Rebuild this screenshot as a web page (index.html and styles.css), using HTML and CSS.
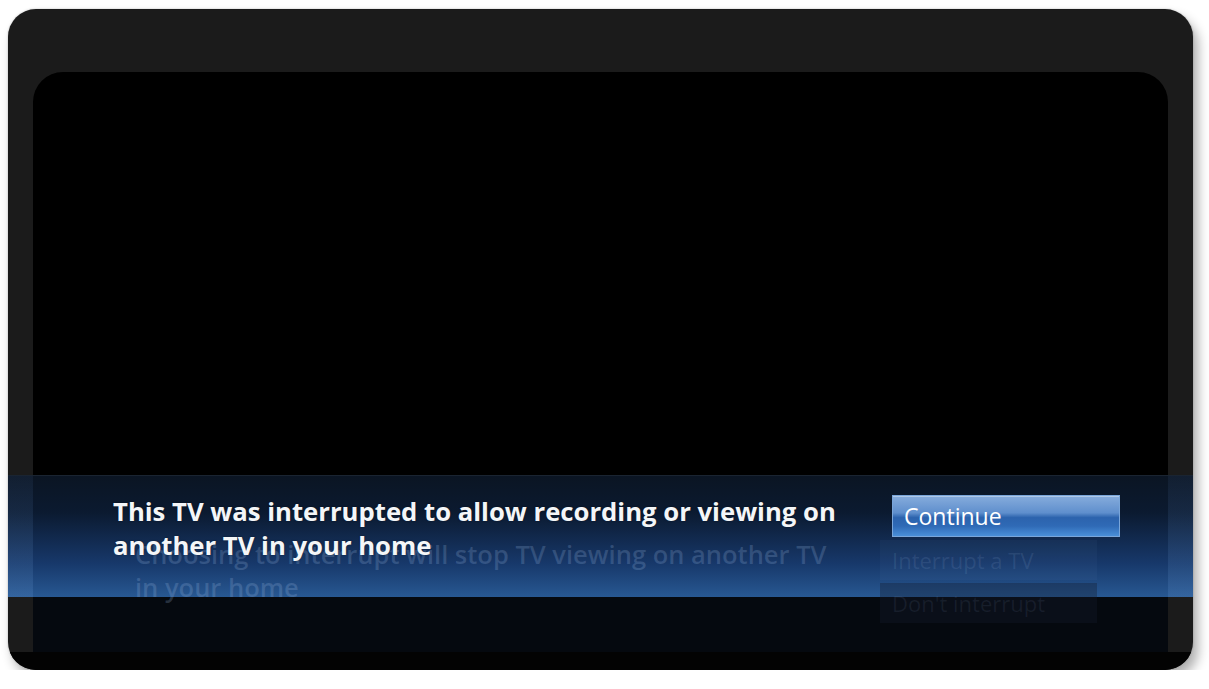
FILE: index.html
```html
<!DOCTYPE html>
<html lang="en">
<head>
<meta charset="utf-8">
<title>TV interrupted</title>
<link rel="stylesheet" href="styles.css">
</head>
<body>
<div class="frame">
  <div class="bezel-top"></div>
  <div class="screen-upper"></div>
  <div class="banner">
    <div class="message">
      <p class="ghost-text">Choosing to interrupt will stop TV viewing on another TV in your home</p>
      <p class="main-text">This TV was interrupted to allow recording or viewing on another TV in your home</p>
    </div>
    <div class="actions">
      <div class="ghost-buttons">
        <div class="ghost-btn ghost-btn-1">Interrupt a TV</div>
        <div class="ghost-btn ghost-btn-2">Don't interrupt</div>
      </div>
      <div class="btn-continue">Continue</div>
    </div>
  </div>
  <div class="screen-lower"></div>
  <div class="bezel-bottom"></div>
</div>
</body>
</html>
```

FILE: styles.css
```css
html, body {
  margin: 0;
  padding: 0;
  background: #ffffff;
}
body {
  padding: 9px 16px 0 8px;
  font-family: "Open Sans", "Noto Sans", sans-serif;
}
.frame {
  width: 1185px;
  height: 661px;
  display: flex;
  flex-direction: column;
  background: #1b1b1b;
  border-radius: 28px;
  overflow: hidden;
  box-shadow: 5px 8px 12px rgba(0, 0, 0, 0.32), 0 0 2px rgba(0,0,0,0.25);
}
.bezel-top {
  height: 63px;
  flex: none;
}
.screen-upper {
  flex: 1;
  margin: 0 25px;
  background: #000;
  border-radius: 30px 30px 0 0;
}
.banner {
  height: 122px;
  flex: none;
  display: flex;
  position: relative;
  background: linear-gradient(180deg, #0b1523 0%, #0b1a30 30%, #17386a 72%, #285892 100%);
  border-top: 1px solid #1a2431;
  box-sizing: border-box;
}
.banner::before,
.banner::after {
  content: "";
  position: absolute;
  top: 0;
  bottom: 0;
  width: 25px;
  background: linear-gradient(180deg, rgba(40,60,90,0.25), rgba(90,140,200,0.25));
}
.banner::before { left: 0; }
.banner::after { right: 0; }
.message {
  display: grid;
  margin-left: 105px;
  width: 760px;
}
.main-text, .ghost-text {
  grid-area: 1 / 1;
  margin: 0;
  color: #f4f6f8;
}
.main-text {
  padding-top: 19px;
  font-size: 25.7px;
  font-weight: 700;
  line-height: 34px;
  text-shadow: 0 0 2px rgba(0,0,0,0.4);
}
.ghost-text {
  padding-top: 62px;
  padding-left: 22px;
  width: 715px;
  font-size: 25.5px;
  font-weight: 600;
  line-height: 33px;
  letter-spacing: 0;
  color: rgba(160, 190, 230, 0.22);
}
.actions {
  display: grid;
  margin-left: 7px;
  padding-top: 19px;
  align-self: start;
}
.btn-continue, .ghost-buttons {
  grid-area: 1 / 1;
}
.btn-continue {
  width: 228px;
  height: 42px;
  box-sizing: border-box;
  padding-left: 11px;
  margin-left: 12px;
  font-size: 23px;
  line-height: 40px;
  color: #ffffff;
  border: 1px solid #7aa6da;
  background: linear-gradient(180deg, #86acdc 0%, #5f8fcd 42%, #2c63ad 54%, #2f6ab6 75%, #4a8fd8 100%);
  box-shadow: inset 0 1px 0 rgba(255,255,255,0.35);
  position: relative;
  z-index: 1;
}
.ghost-buttons {
  display: flex;
  flex-direction: column;
  gap: 3px;
  margin-top: 45px;
}
.ghost-btn {
  width: 217px;
  height: 40px;
  box-sizing: border-box;
  padding-left: 12px;
  font-size: 22px;
  line-height: 40px;
  color: rgba(150, 180, 220, 0.14);
}
.ghost-btn-1 {
  background: rgba(120, 160, 210, 0.06);
}
.ghost-btn-2 {
  background: rgba(20, 30, 45, 0.35);
  color: rgba(120, 140, 170, 0.12);
}
.screen-lower {
  height: 55px;
  flex: none;
  margin: 0 25px;
  background: #05090f;
}
.bezel-bottom {
  height: 18px;
  flex: none;
  background: #030303;
}
```
